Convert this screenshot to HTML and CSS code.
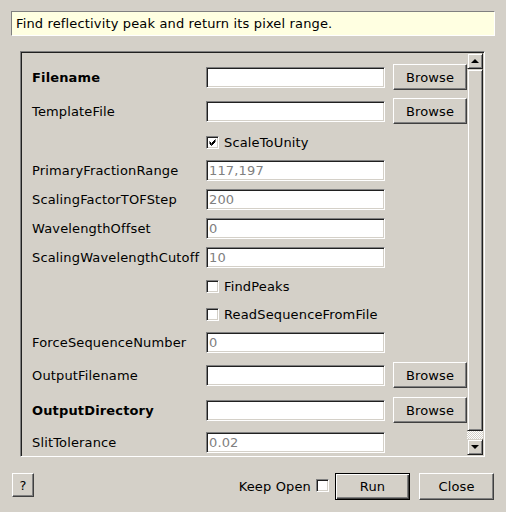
FILE: index.html
```html
<!DOCTYPE html>
<html>
<head>
<meta charset="utf-8">
<link rel="stylesheet" href="styles.css">
</head>
<body>
<div class="dialog">
  <div class="desc">Find reflectivity peak and return its pixel range.</div>
  <div class="frame">
    <div class="content">
      <div class="row btnrow"><span class="label bold">Filename</span><span class="input"></span><span class="button">Browse</span></div>
      <div class="row btnrow"><span class="label">TemplateFile</span><span class="input"></span><span class="button">Browse</span></div>
      <div class="row chkrow"><span class="label"></span><span class="check"><span class="box"><svg width="9" height="9" viewBox="0 0 9 9"><path d="M1.5 3.5 L3.5 5.5 L7.5 1.5 M1.5 4.5 L3.5 6.5 L7.5 2.5 M1.5 5.5 L3.5 7.5 L7.5 3.5" stroke="#000" stroke-width="1" fill="none"/></svg></span>ScaleToUnity</span></div>
      <div class="row"><span class="label">PrimaryFractionRange</span><span class="input">117,197</span></div>
      <div class="row"><span class="label">ScalingFactorTOFStep</span><span class="input">200</span></div>
      <div class="row"><span class="label">WavelengthOffset</span><span class="input">0</span></div>
      <div class="row"><span class="label">ScalingWavelengthCutoff</span><span class="input">10</span></div>
      <div class="row chkrow"><span class="label"></span><span class="check"><span class="box"></span>FindPeaks</span></div>
      <div class="row chkrow"><span class="label"></span><span class="check"><span class="box"></span>ReadSequenceFromFile</span></div>
      <div class="row"><span class="label">ForceSequenceNumber</span><span class="input">0</span></div>
      <div class="row btnrow shift"><span class="label">OutputFilename</span><span class="input"></span><span class="button">Browse</span></div>
      <div class="row btnrow shift"><span class="label bold">OutputDirectory</span><span class="input"></span><span class="button">Browse</span></div>
      <div class="row shift"><span class="label">SlitTolerance</span><span class="input">0.02</span></div>
    </div>
    <div class="scrollbar">
      <div class="sbtn"><span class="arrow up"></span></div>
      <div class="slider"></div>
      <div class="trough"></div>
      <div class="sbtn"><span class="arrow down"></span></div>
    </div>
  </div>
  <div class="bottom">
    <span class="button help">?</span>
    <span class="spacer"></span>
    <span class="keep">Keep Open</span>
    <span class="box keepbox"></span>
    <span class="button run">Run</span>
    <span class="button close">Close</span>
  </div>
</div>
</body>
</html>
```
FILE: styles.css
```css
* { box-sizing: border-box; }
html, body {
  margin: 0;
  padding: 0;
  background: #d4d0c8;
  width: 506px;
  height: 512px;
  overflow: hidden;
  font-family: "DejaVu Sans", sans-serif;
  font-size: 13px;
  letter-spacing: 0.15px;
  color: #000;
}
.dialog {
  padding: 11px 12px 0 11px;
  display: flex;
  flex-direction: column;
}
.desc {
  height: 25px;
  width: 484px;
  background: #ffffe1;
  border-top: 1px solid #808080;
  border-left: 1px solid #808080;
  border-right: 1px solid #ffffff;
  border-bottom: 1px solid #ffffff;
  padding-left: 4px;
  display: flex;
  align-items: center;
}
.frame {
  margin-top: 15px;
  margin-left: 9px;
  width: 465px;
  height: 406px;
  border-top: 1px solid #808080;
  border-left: 1px solid #808080;
  border-right: 1px solid #ffffff;
  border-bottom: 1px solid #ffffff;
  box-shadow: inset 1px 1px 0 #202020, inset -1px -1px 0 #d4d0c8;
  padding: 1px;
  display: flex;
  overflow: hidden;
}
.content {
  flex: 1;
  padding: 11px 0 0 10px;
  display: flex;
  flex-direction: column;
  gap: 8px;
  overflow: hidden;
}
.row {
  display: grid;
  grid-template-columns: 166px 179px 74px;
  column-gap: 8px;
  align-items: center;
  height: 21px;
  flex: none;
}
.row.btnrow { height: 26px; }
.row.chkrow { height: 20px; }
.row.shift { margin-top: 1px; }
.label { white-space: nowrap; }
.bold { font-weight: bold; }
.input {
  height: 21px;
  background: #fff;
  border-top: 1px solid #808080;
  border-left: 1px solid #808080;
  border-right: 1px solid #ffffff;
  border-bottom: 1px solid #ffffff;
  box-shadow: inset 1px 1px 0 #202020, inset -1px -1px 0 #d4d0c8;
  color: #808080;
  padding-left: 2px;
  display: flex;
  align-items: center;
  line-height: 1;
}
.button {
  height: 26px;
  background: #d4d0c8;
  border-top: 1px solid #ffffff;
  border-left: 1px solid #ffffff;
  border-right: 1px solid #404040;
  border-bottom: 1px solid #404040;
  box-shadow: inset -1px -1px 0 #808080;
  display: flex;
  align-items: center;
  justify-content: center;
}
.check {
  grid-column: 2 / span 2;
  display: flex;
  align-items: center;
  gap: 5px;
  white-space: nowrap;
}
.box {
  width: 13px;
  height: 13px;
  flex: none;
  background: #fff;
  border-top: 1px solid #808080;
  border-left: 1px solid #808080;
  border-right: 1px solid #ffffff;
  border-bottom: 1px solid #ffffff;
  box-shadow: inset 1px 1px 0 #202020, inset -1px -1px 0 #d4d0c8;
  padding: 1px;
  display: flex;
}
.box svg { display: block; }
.scrollbar {
  width: 16px;
  flex: none;
  display: flex;
  flex-direction: column;
}
.sbtn {
  height: 16px;
  flex: none;
  background: #d4d0c8;
  border-top: 1px solid #d4d0c8;
  border-left: 1px solid #d4d0c8;
  border-right: 1px solid #202020;
  border-bottom: 1px solid #202020;
  box-shadow: inset 1px 1px 0 #ffffff, inset -1px -1px 0 #808080;
  display: flex;
  align-items: center;
  justify-content: center;
}
.arrow {
  width: 0;
  height: 0;
  border-left: 4px solid transparent;
  border-right: 4px solid transparent;
}
.arrow.up { border-bottom: 4px solid #000; }
.arrow.down { border-top: 4px solid #000; }
.slider {
  height: 362px;
  flex: none;
  background: #d4d0c8;
  border-top: 1px solid #d4d0c8;
  border-left: 1px solid #d4d0c8;
  border-right: 1px solid #202020;
  border-bottom: 1px solid #202020;
  box-shadow: inset 1px 1px 0 #ffffff, inset -1px -1px 0 #808080;
}
.trough {
  flex: 1;
  background: repeating-conic-gradient(#ffffff 0 25%, #d4d0c8 0 50%) 0 0 / 2px 2px;
}
.bottom {
  margin-top: 16px;
  display: flex;
  align-items: flex-start;
  padding-left: 1px;
}
.help {
  width: 22px;
  height: 24px;
}
.spacer { flex: 1; }
.keep {
  height: 27px;
  display: flex;
  align-items: center;
  margin-right: 5px;
}
.keepbox {
  margin-top: 6px;
  margin-right: 6px;
}
.run {
  width: 75px;
  height: 27px;
  border: 1px solid #000;
  box-shadow: inset 1px 1px 0 #ffffff, inset -1px -1px 0 #404040, inset -2px -2px 0 #808080;
  margin-right: 9px;
}
.close {
  width: 75px;
  height: 27px;
}
```
